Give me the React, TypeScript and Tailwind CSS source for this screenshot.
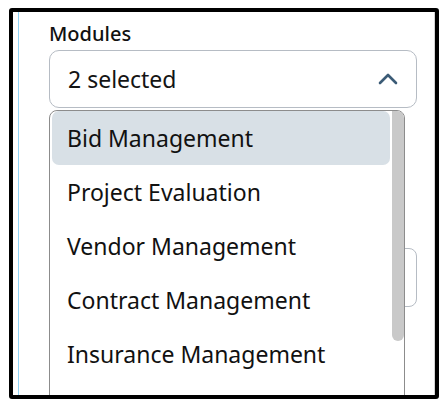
const MODULES = [
  "Bid Management",
  "Project Evaluation",
  "Vendor Management",
  "Contract Management",
  "Insurance Management",
];

export default function App() {
  return (
    <div className="h-[411px] w-[447px] bg-white pl-[9px] pt-[8px] font-['Noto_Sans',sans-serif]">
      <div className="h-[391px] w-[430px] overflow-hidden rounded-[3px] border-4 border-black">
        <div className="flex h-full border-r border-[#d4d4d4] pl-[5px]">
          <div className="h-full w-px bg-[#8fd3f5]" />
          <div className="relative flex-1 pl-[30px] pt-[10px]">
            <label className="mb-[4px] block text-[20px] leading-[24px] font-medium text-[#111]">
              Modules
            </label>
            <div className="relative w-[368px]">
              <button
                type="button"
                className="flex h-[58px] w-full items-center justify-between rounded-[10px] border border-[#b6bcc4] bg-white pr-[18px] pl-[18px] text-[23px] text-[#141414]"
              >
                <span>2 selected</span>
                <svg
                  viewBox="0 0 20 12"
                  className="h-[12px] w-[20px]"
                  fill="none"
                  stroke="#3b5b76"
                  strokeWidth={2.6}
                  strokeLinecap="round"
                  strokeLinejoin="round"
                >
                  <path d="M2 10 10 2l8 8" />
                </svg>
              </button>
              <div className="absolute top-[60px] left-0 z-10 flex h-[300px] w-[356px] overflow-hidden rounded-[8px] border border-[#8c8c8c] bg-white">
                <ul className="flex flex-1 flex-col pr-[2px] pl-[2px]">
                  {MODULES.map((m, i) => (
                    <li
                      key={m}
                      className={`flex h-[54px] shrink-0 items-center rounded-[7px] pl-[15px] text-[23px] text-[#111] ${
                        i === 0 ? "bg-[#d8e0e6]" : ""
                      }`}
                    >
                      {m}
                    </li>
                  ))}
                </ul>
                <div className="w-[12px] shrink-0">
                  <div className="h-[230px] w-full rounded-b-full rounded-tr-[7px] bg-[#c9c9c9]" />
                </div>
              </div>
            </div>
            <div className="mt-[140px] h-[59px] w-[368px] rounded-[8px] border border-[#b6bcc4] bg-white" />
          </div>
        </div>
      </div>
    </div>
  );
}
